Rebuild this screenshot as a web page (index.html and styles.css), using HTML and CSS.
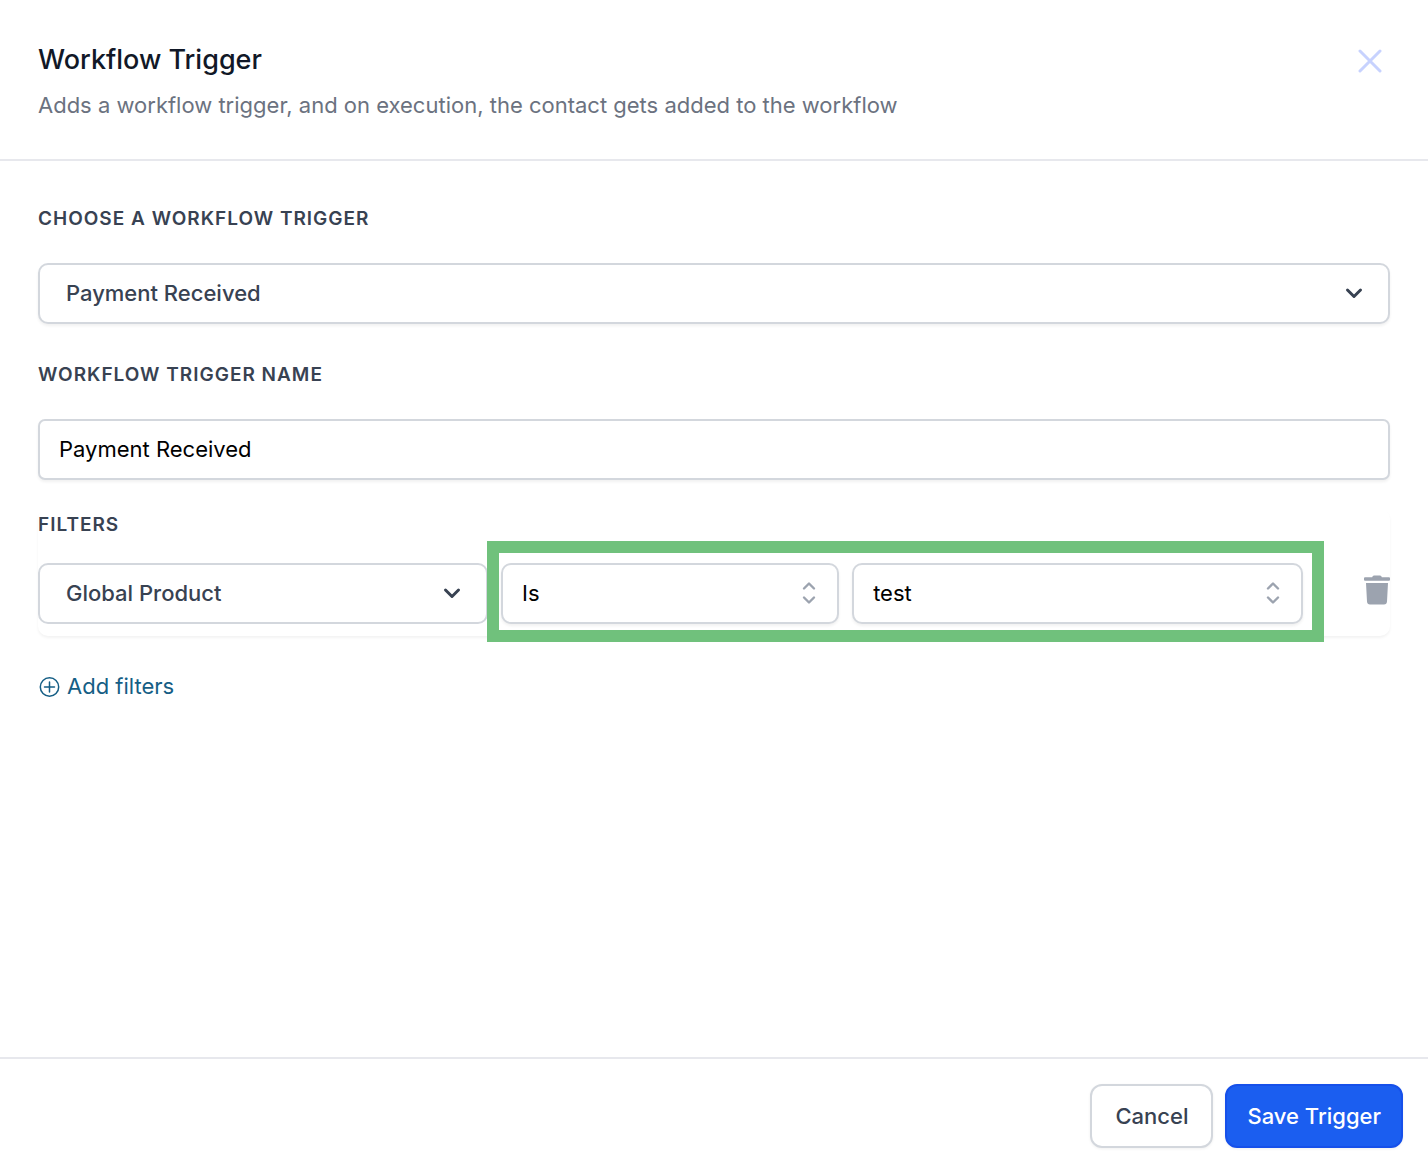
FILE: index.html
```html
<!DOCTYPE html>
<html lang="en">
<head>
  <meta charset="utf-8">
  <meta name="viewport" content="width=device-width, initial-scale=1">
  <title>Workflow Trigger</title>
  <link rel="stylesheet" href="styles.css">
</head>
<body>
  <form class="panel">
    <header class="panel-header">
      <div class="heading">
        <h1 class="title">Workflow Trigger</h1>
        <p class="subtitle">Adds a workflow trigger, and on execution, the contact gets added to the workflow</p>
      </div>
      <button class="icon-button close" type="button" aria-label="Close">
        <svg width="24" height="24" viewBox="0 0 24 24" fill="none" stroke="currentColor" stroke-width="3" stroke-linecap="round"><path d="M2 2l20 20M22 2L2 22"/></svg>
      </button>
    </header>

    <main class="panel-body">
      <div class="field">
        <label class="label" for="trigger">Choose a workflow trigger</label>
        <div class="select-box">
          <select class="control select select-strong" id="trigger"><option>Payment Received</option></select>
          <svg class="chevron" width="18" height="12" viewBox="0 0 18 12" fill="none" stroke="currentColor" stroke-width="3" stroke-linecap="round" stroke-linejoin="round"><path d="M2.5 3L9 9.500l6.500-6.500"/></svg>
        </div>
      </div>

      <div class="field">
        <label class="label" for="name">Workflow trigger name</label>
        <input class="control input" id="name" type="text" value="Payment Received">
      </div>

      <section class="filters">
        <h2 class="label">Filters</h2>
        <div class="filter-row">
          <div class="select-box filter-field">
            <select class="control select select-strong" aria-label="Filter field"><option>Global Product</option></select>
            <svg class="chevron" width="18" height="12" viewBox="0 0 18 12" fill="none" stroke="currentColor" stroke-width="3" stroke-linecap="round" stroke-linejoin="round"><path d="M2.500 3L9 9.500l6.500-6.500"/></svg>
          </div>
          <div class="condition">
            <div class="select-box">
              <select class="control select" aria-label="Operator"><option>Is</option></select>
              <svg class="sorter" width="14" height="24" viewBox="0 0 14 24" fill="none" stroke="currentColor" stroke-width="2.400" stroke-linecap="round" stroke-linejoin="round"><path d="M2 7.500L7 2.500l5 5M2 16.500l5 5 5-5"/></svg>
            </div>
            <div class="select-box">
              <select class="control select" aria-label="Value"><option>test</option></select>
              <svg class="sorter" width="14" height="24" viewBox="0 0 14 24" fill="none" stroke="currentColor" stroke-width="2.400" stroke-linecap="round" stroke-linejoin="round"><path d="M2 7.500L7 2.500l5 5M2 16.500l5 5 5-5"/></svg>
            </div>
          </div>
          <button class="icon-button trash" type="button" aria-label="Delete filter">
            <svg width="26" height="30" viewBox="0 0 26 30" fill="currentColor"><path d="M1 2.200h7.200Q8.500.500 10 .500h6q1.500 0 1.800 1.700H25q1 0 1 1v1.600q0 1-1 1H1q-1 0-1-1V3.200q0-1 1-1zM2 8h22l-1 18.500q-.2 3-3 3H6q-2.800 0-3-3z"/></svg>
          </button>
        </div>
      </section>

      <button class="add-filters" type="button">
        <svg width="22" height="22" viewBox="0 0 22 22" fill="none" stroke="currentColor" stroke-width="1.500" stroke-linecap="round"><circle cx="11.500" cy="12" r="9.200"/><path d="M11.500 7v10M6.500 12h10"/></svg>
        Add filters
      </button>
    </main>

    <footer class="panel-footer">
      <button class="button" type="button">Cancel</button>
      <button class="button button-primary" type="submit">Save Trigger</button>
    </footer>
  </form>
</body>
</html>
```
FILE: styles.css
```css
* {
  box-sizing: border-box;
}

body {
  margin: 0;
  background: #fff;
  color: #384252;
  font-family: Inter, "Liberation Sans", sans-serif;
  font-size: 22px;
  line-height: 32px;
}

button,
input,
select {
  font: inherit;
  color: inherit;
}

svg {
  display: block;
}

.panel {
  display: flex;
  flex-direction: column;
  min-height: 100vh;
}

.panel-header {
  display: flex;
  justify-content: space-between;
  align-items: flex-start;
  padding: 40px 38px 38px;
  border-bottom: 2px solid #e7e8ed;
}

.title {
  margin: 0 0 9px;
  color: #111827;
  font-size: 27px;
  font-weight: 500;
  line-height: 40px;
}

.subtitle {
  margin: 0;
  color: #6b7280;
}

.icon-button {
  padding: 0;
  border: 0;
  background: none;
  cursor: pointer;
}

.close {
  margin: 9px 8px 0 0;
  color: #c7d2fe;
}

.panel-body {
  display: flex;
  flex: 1;
  flex-direction: column;
  padding: 42px 38px;
}

.field {
  display: flex;
  flex-direction: column;
  gap: 28px;
  margin-bottom: 35px;
}

.label {
  margin: 0;
  font-size: 19px;
  font-weight: 600;
  letter-spacing: 1px;
  line-height: 32px;
  text-transform: uppercase;
}

.control {
  width: 100%;
  height: 61px;
  padding: 0 19px 2px;
  border: 2px solid #d3d7dd;
  border-radius: 10px;
  background: #fff;
  box-shadow: 0 2px 3px rgba(0, 0, 0, 0.06);
  color: #000;
}

.input {
  border-radius: 7px;
}

.select {
  grid-area: 1 / 1;
  appearance: none;
}

.select-strong {
  padding: 0 26px 2px;
  color: #384252;
  font-weight: 500;
}

.select-box {
  display: grid;
  align-items: center;
}

.chevron,
.sorter {
  z-index: 1;
  grid-area: 1 / 1;
  justify-self: end;
  margin-bottom: 2px;
  pointer-events: none;
}

.chevron {
  margin-right: 27px;
}

.sorter {
  margin-right: 23px;
  color: #9ca3af;
}

.filters {
  display: flex;
  flex-direction: column;
  gap: 22px;
  margin-top: -6px;
  padding-bottom: 12px;
  border-radius: 10px;
  box-shadow: 0 2px 3px rgba(0, 0, 0, 0.05);
}

.filter-row {
  display: flex;
  align-items: center;
}

.filter-field {
  flex: 450;
}

.filter-field .control {
  box-shadow: none;
}

.condition {
  position: relative;
  display: grid;
  flex: 802;
  grid-template-columns: 3fr 4fr;
  gap: 13px;
  margin: 0 61px 0 13px;
}

.condition::after {
  content: "";
  position: absolute;
  z-index: 2;
  inset: -22px -21px -18px -14px;
  border: 12px solid #70c17c;
  pointer-events: none;
}

.trash {
  margin-top: -8px;
  color: #9ca3af;
}

.add-filters {
  display: flex;
  align-items: center;
  align-self: flex-start;
  gap: 7px;
  margin-top: 34px;
  padding: 0;
  border: 0;
  background: none;
  color: #155e85;
  cursor: pointer;
}

.panel-footer {
  display: flex;
  justify-content: flex-end;
  gap: 12px;
  padding: 25px 25px 24px;
  border-top: 2px solid #e7e8ed;
}

.button {
  height: 64px;
  padding: 0 23px;
  border: 2px solid #d3d7dd;
  border-radius: 12px;
  background: #fff;
  box-shadow: 0 1px 3px rgba(0, 0, 0, 0.06);
  font-weight: 500;
  cursor: pointer;
}

.button-primary {
  padding: 0 20px;
  border-color: #1650ea;
  background: #1b5ef0;
  color: #fff;
}
```
